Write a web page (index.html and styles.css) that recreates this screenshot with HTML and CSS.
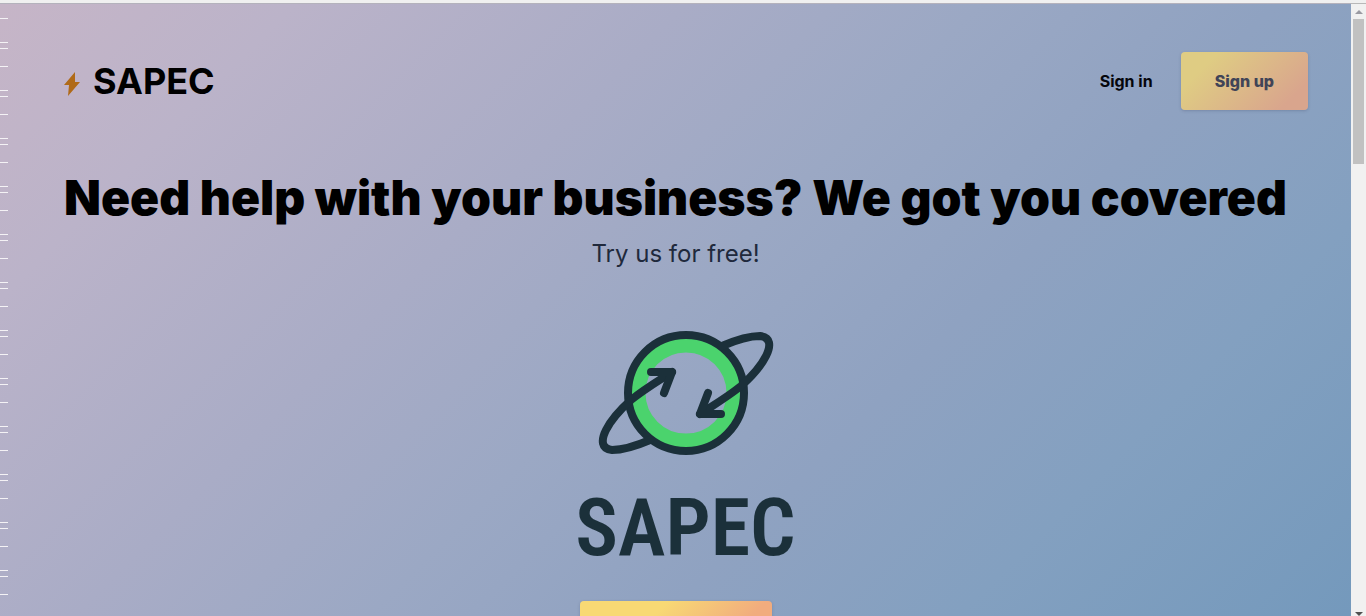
FILE: index.html
```html
<!DOCTYPE html>
<html lang="en">
<head>
<meta charset="utf-8">
<meta name="viewport" content="width=device-width, initial-scale=1">
<title>SAPEC</title>
<link rel="stylesheet" href="styles.css">
</head>
<body>
<div class="window">
  <div class="page">
    <div class="ticks" aria-hidden="true"></div>
    <header class="header">
      <a class="brand" href="#">
        <svg class="bolt" viewBox="0 0 18 26" aria-hidden="true"><path d="M12 1 1 14h5L5 25 17 11h-5z"/></svg>
        SAPEC
      </a>
      <nav class="nav">
        <a class="signin" href="#">Sign in</a>
        <button class="button signup" type="button">Sign up</button>
      </nav>
    </header>
    <main class="hero">
      <h1 class="title">Need help with your business? We got you covered</h1>
      <p class="subtitle">Try us for free!</p>
      <div class="logo">
        <svg class="emblem" viewBox="0 0 176 126" aria-hidden="true">
          <circle class="ring-green" cx="88" cy="63" r="48"/>
          <g class="ring-dark">
            <circle cx="88" cy="63" r="58"/>
            <g id="orbit">
              <path d="M124 16C138 10 152 6 162 6C173 7 173 16 168 26C162 38 152 48 143 56C128 68 114 76 102 84"/>
              <path d="M110 63L102 84H123"/>
            </g>
            <use href="#orbit" transform="rotate(180 88 63)"/>
          </g>
        </svg>
        <div class="wordmark">SAPEC</div>
      </div>
      <button class="button start" type="button" aria-label="Get started"></button>
    </main>
  </div>
  <div class="scrollbar" aria-hidden="true">
    <div class="arrow-up"></div>
    <div class="thumb"></div>
    <div class="arrow-down"></div>
  </div>
</div>
</body>
</html>
```

FILE: styles.css
```css
* { box-sizing: border-box; }
body {
  margin: 0;
  font-family: Inter, "Liberation Sans", sans-serif;
  color: #000;
}
.window {
  display: flex;
  height: 100vh;
  overflow: hidden;
  border-top: 3px solid #f0f0f0;
}
.page {
  position: relative;
  flex: 1;
  min-width: 0;
  overflow: hidden;
  padding: 48px 43px 0;
  border-top: 1px solid #b4b2bc;
  background: linear-gradient(135deg, #c6b5c7 0%, #bbb3c9 15%, #a9acc6 35%, #9ba8c4 50%, #8fa2c1 65%, #83a0c0 80%, #7499bc 100%);
}
.ticks {
  position: absolute;
  top: -4px;
  bottom: 0;
  left: 0;
  width: 8px;
  background: repeating-linear-gradient(#f4f2f5 0 1px, transparent 1px 18px, #f4f2f5 18px 19px, transparent 19px 42px, #f4f2f5 42px 43px, transparent 43px 48px);
}
.header, .nav, .brand {
  display: flex;
  align-items: center;
}
.header { justify-content: space-between; }
.brand {
  gap: 12px;
  padding-left: 20px;
  font-size: 36px;
  line-height: 40px;
  font-weight: 700;
  color: #000;
  text-decoration: none;
}
.bolt {
  width: 18px;
  height: 26px;
  margin-top: 6px;
  fill: #b06a18;
}
.nav { gap: 28px; }
.signin {
  font-size: 16px;
  font-weight: 700;
  color: #05060c;
  text-decoration: none;
}
.button {
  height: 58px;
  border: 0;
  border-radius: 4px;
  font: 800 16px/24px Inter, "Liberation Sans", sans-serif;
  box-shadow: 0 1px 3px rgba(50, 60, 90, 0.25);
}
.signup {
  padding: 0 34px;
  color: #404457;
  background: linear-gradient(135deg, #dfcc83 20%, #d9a58d 85%);
}
.hero {
  display: flex;
  flex-direction: column;
  align-items: center;
  padding-top: 64px;
}
.title {
  margin: 0;
  font-size: 48px;
  line-height: 48px;
  font-weight: 900;
  text-align: center;
}
.subtitle {
  margin: 16px 0 0;
  font-size: 24px;
  line-height: 32px;
  color: #20293c;
}
.logo {
  display: flex;
  flex-direction: column;
  align-items: center;
  margin: 60px 0 28px;
  padding-left: 20px;
}
.emblem { width: 176px; height: 126px; }
.ring-green { fill: none; stroke: #4bd36d; stroke-width: 15; }
.ring-dark {
  fill: none;
  stroke: #1b303a;
  stroke-width: 8;
  stroke-linecap: round;
  stroke-linejoin: round;
}
.wordmark {
  margin-top: 28px;
  font-family: "Roboto Condensed", "Liberation Sans Narrow", Roboto, sans-serif;
  font-size: 80px;
  line-height: 89px;
  font-weight: 600;
  color: #1b303a;
}
.start {
  width: 192px;
  background: linear-gradient(135deg, #f8d974 35%, #f1ac7e 75%);
}
.scrollbar {
  display: flex;
  flex-direction: column;
  align-items: center;
  width: 15px;
  border-top: 1px solid #b8b8b8;
  background: #f1f1f1;
}
.arrow-up, .arrow-down {
  border: 4px solid transparent;
  border-top-width: 0;
  border-bottom: 4px solid #9a9aa2;
  margin: 6px 0 5px;
}
.thumb { width: 11px; height: 145px; background: #c1c1c1; }
.arrow-down {
  margin: auto 0 0;
  border-bottom-width: 0;
  border-top: 4px solid #505050;
}
```
